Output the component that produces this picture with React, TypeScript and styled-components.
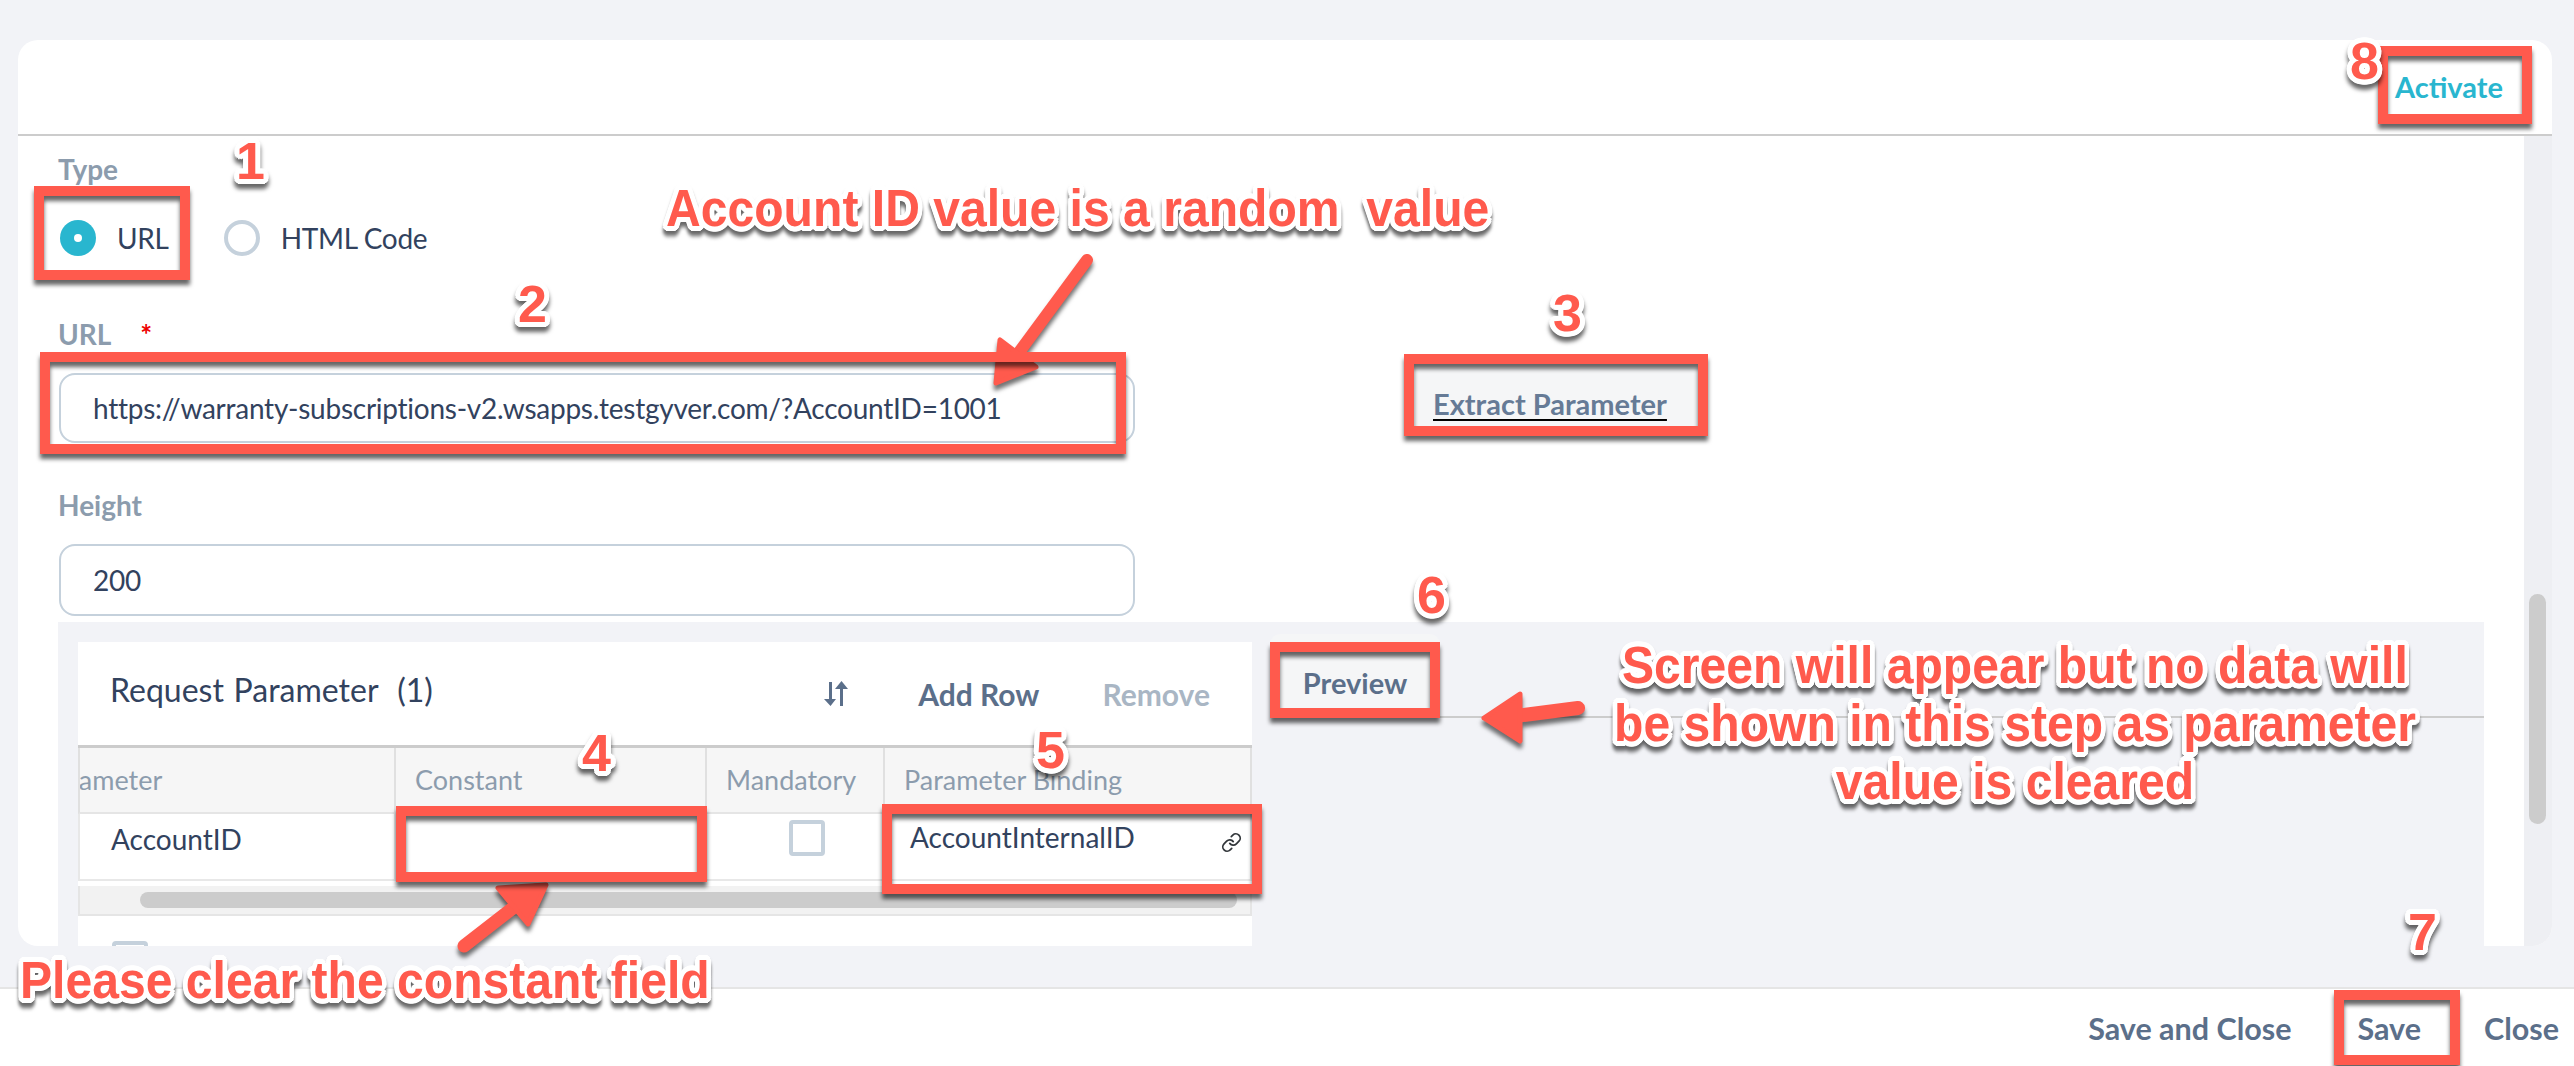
import React from "react";
import styled, { createGlobalStyle } from "styled-components";
import { Link } from "lucide-react";

const GlobalStyle = createGlobalStyle`
	html, body { margin: 0; padding: 0; background: #f2f3f7; }
	* { box-sizing: border-box; }
	body { font-family: Lato, "Liberation Sans", sans-serif; color: #32425e; }
`;

const RED = "#ff5a4d";

// white ring round the annotation text
const ring = Array.from({ length: 20 }, (_, i) => {
	const a = (i / 20) * Math.PI * 2;
	return `${(Math.cos(a) * 5).toFixed(1)}px ${(Math.sin(a) * 5).toFixed(1)}px 0 #fff`;
}).join(", ");

const Page = styled.div`
	position: relative;
	width: 2574px;
	height: 1066px;
	overflow: hidden;
	display: flex;
	flex-direction: column;
	padding-top: 40px;
`;

const Card = styled.div`
	margin: 0 22px 41px 18px;
	flex: 1;
	min-height: 0;
	background: #fff;
	border-radius: 20px;
	overflow: hidden;
	display: flex;
	flex-direction: column;
`;

const CardHeader = styled.div`
	height: 96px;
	flex: none;
	border-bottom: 2px solid #ccc;
	display: flex;
	align-items: flex-end;
	justify-content: flex-end;
	padding: 0 49px 29px 0;
`;

const ActivateLink = styled.span`
	font-size: 29px;
	line-height: 36px;
	font-weight: 700;
	color: #29b6cf;
`;

const CardBody = styled.div`
	flex: 1;
	min-height: 0;
	display: flex;
`;

const Form = styled.div`
	flex: 1;
	min-width: 0;
	padding: 16px 40px 0;
`;

const ScrollRail = styled.div`
	width: 28px;
	flex: none;
	background: #eeeff3;
	padding: 458px 6px 0 5px;
`;

const ScrollThumb = styled.div`
	height: 230px;
	background: #ccc;
	border-radius: 9px;
`;

const FieldLabel = styled.div<{ $mt?: number }>`
	font-size: 28px;
	line-height: 34px;
	font-weight: 700;
	color: #8c9cad;
	margin-top: ${(p) => p.$mt ?? 0}px;
`;

const Star = styled.span`
	color: #e00;
	margin-left: 29px;
`;

const RadioRow = styled.div`
	display: flex;
	align-items: center;
	margin: 34px 0 0 2px;
	height: 36px;
`;

const Radio = styled.span<{ $on?: boolean }>`
	width: 36px;
	height: 36px;
	border-radius: 50%;
	flex: none;
	display: flex;
	align-items: center;
	justify-content: center;
	border: ${(p) => (p.$on ? "none" : "4px solid #c5d1dc")};
	background: ${(p) => (p.$on ? "#29b6cf" : "#fff")};
	&::after {
		content: "";
		width: 8px;
		height: 8px;
		border-radius: 50%;
		background: ${(p) => (p.$on ? "#fff" : "transparent")};
	}
`;

const RadioText = styled.span<{ $gap: number }>`
	font-size: 28px;
	letter-spacing: -0.3px;
	margin: 0 ${(p) => p.$gap}px 0 21px;
	color: #32425e;
`;

const InputRow = styled.div`
	display: flex;
	align-items: flex-start;
`;

const TextBox = styled.div<{ $h: number; $mt: number }>`
	width: 1076px;
	height: ${(p) => p.$h}px;
	margin: ${(p) => p.$mt}px 0 0 1px;
	border: 2px solid #c5d1dc;
	border-radius: 16px;
	display: flex;
	align-items: center;
	padding-left: 32px;
	font-size: 28px;
	letter-spacing: -0.25px;
	color: #32425e;
	white-space: nowrap;
`;

const ExtractButton = styled.span`
	margin: 17px 0 0 280px;
	width: 284px;
	height: 58px;
	background: #f5f6f7;
	display: flex;
	align-items: center;
	padding: 12px 0 0 18px;
	font-size: 29px;
	font-weight: 700;
	color: #667b96;
	white-space: nowrap;
	text-decoration: underline;
	text-decoration-color: #000;
	text-decoration-thickness: 2px;
	text-underline-offset: 4px;
`;

const Panel = styled.div`
	margin-top: 6px;
	height: 340px;
	background: #f2f3f7;
	display: flex;
	padding: 20px 0 0 20px;
`;

const TablePanel = styled.div`
	width: 1174px;
	flex: none;
	background: #fff;
`;

const TableToolbar = styled.div`
	height: 103px;
	display: flex;
	align-items: center;
	padding: 0 42px 0 32px;
`;

const TableTitle = styled.span`
	font-size: 32px;
	word-spacing: 1.5px;
	color: #32425e;
	white-space: pre;
	margin: 0 auto 8px 0;
`;

const ToolButton = styled.span<{ $off?: boolean; $ml: number }>`
	font-size: 30px;
	font-weight: 700;
	margin-left: ${(p) => p.$ml}px;
	color: ${(p) => (p.$off ? "#a9b6c4" : "#5b6f8a")};
	display: flex;
`;

const TableGrid = styled.div`
	display: grid;
	grid-template-columns: 318px 311px 178px 367px;
	border-top: 3px solid #ccc;
`;

const HeadCell = styled.div`
	height: 66px;
	background: #f6f6f6;
	border-right: 2px solid #e0e0e0;
	border-bottom: 2px solid #e5e5e5;
	font-size: 27px;
	line-height: 63px;
	padding-left: 19px;
	color: #8c9cad;
	overflow: hidden;
	white-space: nowrap;
`;

const ClippedHeadCell = styled(HeadCell)`
	padding-left: 0;
	border-left: 2px solid #e0e0e0;
`;

const ClippedWord = styled.span`
	display: block;
	margin-left: -40px;
`;

const BodyCell = styled.div`
	height: 67px;
	border-right: 2px solid #e8e8e8;
	border-bottom: 2px solid #e8e8e8;
	font-size: 28px;
	color: #32425e;
	display: flex;
	align-items: center;
`;

const NameCell = styled(BodyCell)`
	border-left: 2px solid #e8e8e8;
	padding: 0 0 15px 31px;
`;

const CheckCell = styled(BodyCell)`
	justify-content: center;
	align-items: flex-start;
	padding: 6px 0 0 23px;
`;

const BindingCell = styled(BodyCell)`
	align-items: flex-start;
	justify-content: space-between;
	padding: 4px 8px 0 25px;
	line-height: 38px;
	svg {
		margin-top: 14px;
		color: #32363a;
	}
`;

const CheckBox = styled.span<{ $mt?: number; $ml?: number }>`
	display: block;
	width: 36px;
	height: 36px;
	border: 4px solid #c5d1dc;
	border-radius: 4px;
	background: #fff;
	margin: ${(p) => p.$mt ?? 0}px 0 0 ${(p) => p.$ml ?? 0}px;
`;

const HScrollTrack = styled.div`
	margin-top: 5px;
	height: 30px;
	background: #f2f2f2;
	border: 2px solid #e5e5e5;
	border-top: none;
	padding: 6px 13px 0 60px;
`;

const HScrollThumb = styled.div`
	height: 16px;
	background: #ccc;
	border-radius: 8px;
`;

const PreviewPane = styled.div`
	flex: 1;
	align-self: flex-start;
	margin: -8px 0 0 18px;
	height: 84px;
	border-bottom: 2px solid #ccc;
`;

const PreviewButton = styled.span`
	display: flex;
	align-items: center;
	justify-content: center;
	width: 170px;
	height: 76px;
	padding-top: 20px;
	background: #f5f6f7;
	border-radius: 10px;
	font-size: 29px;
	font-weight: 700;
	color: #5b6f8a;
`;

const Footer = styled.div`
	height: 79px;
	flex: none;
	background: #fff;
	border-top: 2px solid #e5e5e5;
	display: flex;
	align-items: center;
	justify-content: flex-end;
	padding: 0 15px 0 0;
`;

const FooterButton = styled.span<{ $ml?: number }>`
	font-size: 30.5px;
	font-weight: 700;
	color: #5b6f8a;
	margin-left: ${(p) => p.$ml ?? 0}px;
`;

// annotations drawn over the screenshot
const MarkBox = styled.div<{ $x: number; $y: number; $w: number; $h: number }>`
	position: absolute;
	left: ${(p) => p.$x}px;
	top: ${(p) => p.$y}px;
	width: ${(p) => p.$w}px;
	height: ${(p) => p.$h}px;
	border: 10px solid ${RED};
	filter: drop-shadow(0 5px 2px rgba(0, 0, 0, 0.6));
`;

const MarkText = styled.div<{ $x: number; $y: number; $sx?: number }>`
	position: absolute;
	left: ${(p) => p.$x}px;
	top: ${(p) => p.$y}px;
	font-family: "Liberation Sans", Arial, sans-serif;
	font-weight: 700;
	font-size: 52px;
	line-height: 58px;
	color: ${RED};
	white-space: pre;
	text-align: center;
	text-shadow: ${ring};
	filter: drop-shadow(0 5px 2px rgba(0, 0, 0, 0.6));
	transform: scaleX(${(p) => p.$sx ?? 0.925});
	transform-origin: left top;
`;

const MarkArrows = styled.svg`
	position: absolute;
	left: 0;
	top: 0;
	filter: drop-shadow(0 5px 2px rgba(0, 0, 0, 0.55));
`;

const SortIcon = () => (
	<svg width="26" height="26" viewBox="0 0 26 26" fill="#5b6f8a">
		<path d="M6 1h3v17h4l-5.500 7L1 18h5z" />
		<path d="M17 8h3v17h-3V8zM18.500 0l6.500 8H12z" />
	</svg>
);

const boxes = [
	{ x: 34, y: 186, w: 156, h: 94 },
	{ x: 40, y: 352, w: 1086, h: 102 },
	{ x: 1404, y: 354, w: 304, h: 82 },
	{ x: 396, y: 806, w: 311, h: 76 },
	{ x: 882, y: 804, w: 380, h: 90 },
	{ x: 1270, y: 642, w: 170, h: 76 },
	{ x: 2334, y: 990, w: 126, h: 75 },
	{ x: 2378, y: 46, w: 154, h: 78 },
];

const digits = [
	{ t: "1", x: 236, y: 132 },
	{ t: "2", x: 518, y: 275 },
	{ t: "3", x: 1553, y: 284 },
	{ t: "4", x: 582, y: 724 },
	{ t: "5", x: 1036, y: 721 },
	{ t: "6", x: 1417, y: 566 },
	{ t: "7", x: 2408, y: 903 },
	{ t: "8", x: 2350, y: 32 },
];

export default function App() {
	return (
		<Page>
			<GlobalStyle />
			<Card>
				<CardHeader>
					<ActivateLink>Activate</ActivateLink>
				</CardHeader>
				<CardBody>
					<Form>
						<FieldLabel>Type</FieldLabel>
						<RadioRow>
							<Radio $on />
							<RadioText $gap={55}>URL</RadioText>
							<Radio />
							<RadioText $gap={0}>HTML Code</RadioText>
						</RadioRow>
						<FieldLabel $mt={61}>
							URL<Star>*</Star>
						</FieldLabel>
						<InputRow>
							<TextBox $h={70} $mt={22}>
								https://warranty-subscriptions-v2.wsapps.testgyver.com/?AccountID=1001
							</TextBox>
							<ExtractButton>Extract Parameter</ExtractButton>
						</InputRow>
						<FieldLabel $mt={45}>Height</FieldLabel>
						<TextBox $h={72} $mt={22}>
							200
						</TextBox>
						<Panel>
							<TablePanel>
								<TableToolbar>
									<TableTitle>Request Parameter  (1)</TableTitle>
									<ToolButton $ml={0}>
										<SortIcon />
									</ToolButton>
									<ToolButton $ml={69}>Add Row</ToolButton>
									<ToolButton $ml={63} $off>
										Remove
									</ToolButton>
								</TableToolbar>
								<TableGrid>
									<ClippedHeadCell>
										<ClippedWord>Parameter</ClippedWord>
									</ClippedHeadCell>
									<HeadCell>Constant</HeadCell>
									<HeadCell>Mandatory</HeadCell>
									<HeadCell>Parameter Binding</HeadCell>
									<NameCell>AccountID</NameCell>
									<BodyCell />
									<CheckCell>
										<CheckBox />
									</CheckCell>
									<BindingCell>
										AccountInternalID
										<Link size={21} strokeWidth={2} />
									</BindingCell>
								</TableGrid>
								<HScrollTrack>
									<HScrollThumb />
								</HScrollTrack>
								<CheckBox $mt={25} $ml={34} />
							</TablePanel>
							<PreviewPane>
								<PreviewButton>Preview</PreviewButton>
							</PreviewPane>
						</Panel>
					</Form>
					<ScrollRail>
						<ScrollThumb />
					</ScrollRail>
				</CardBody>
			</Card>
			<Footer>
				<FooterButton>Save and Close</FooterButton>
				<FooterButton $ml={66}>Save</FooterButton>
				<FooterButton $ml={63}>Close</FooterButton>
			</Footer>

			<MarkArrows width="2574" height="1066" viewBox="0 0 2574 1066">
				<g fill="none" stroke={RED} strokeLinecap="round" strokeLinejoin="round">
					<path d="M1087 260 L1006 370" strokeWidth="12" />
					<path d="M1000 340 L996 383 L1036 367 Z" fill={RED} strokeWidth="5" />
					<path d="M464 946 L536 890" strokeWidth="13" />
					<path d="M498 888 L546 885 L528 924 Z" fill={RED} strokeWidth="5" />
					<path d="M1578 708 L1500 718" strokeWidth="14" />
					<path d="M1520 694 L1484 718 L1520 741 Z" fill={RED} strokeWidth="5" />
				</g>
			</MarkArrows>

			{boxes.map((b) => (
				<MarkBox key={`${b.x}-${b.y}`} $x={b.x} $y={b.y} $w={b.w} $h={b.h} />
			))}
			{digits.map((d) => (
				<MarkText key={d.t} $x={d.x} $y={d.y} $sx={1}>
					{d.t}
				</MarkText>
			))}
			<MarkText $x={666} $y={179}>
				{"Account ID value is a random  value"}
			</MarkText>
			<MarkText $x={1614} $y={636}>
				{"Screen will appear but no data will\nbe shown in this step as parameter\nvalue is cleared"}
			</MarkText>
			<MarkText $x={20} $y={951}>
				Please clear the constant field
			</MarkText>
		</Page>
	);
}
